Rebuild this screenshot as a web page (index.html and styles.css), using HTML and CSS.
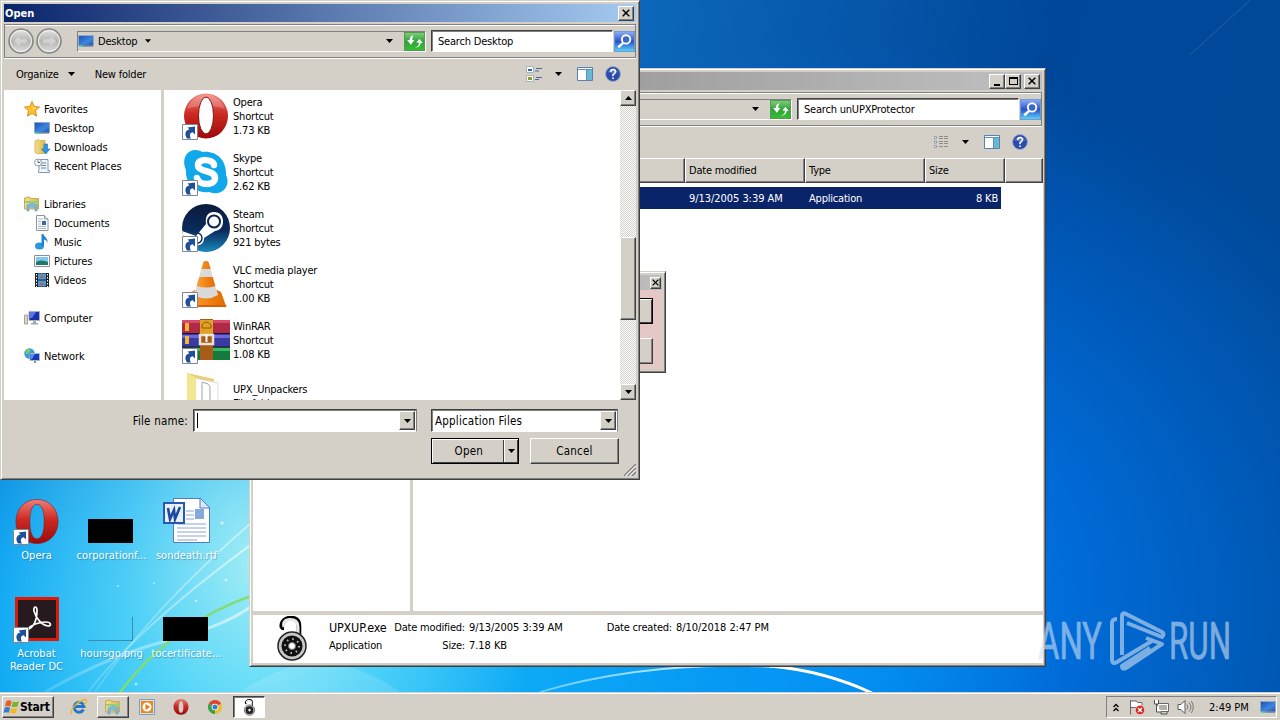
FILE: index.html
```html
<!DOCTYPE html>
<html lang="en">
<head>
    <meta charset="UTF-8">
    <meta name="viewport" content="width=device-width, initial-scale=1.0">
    <title>Desktop</title>
    <link rel="stylesheet" href="styles.css">
</head>
<body>
    <!-- Icon library -->
    <svg class="defs" width="0" height="0">
        <defs>
            <linearGradient id="gRed" x1="0" y1="0" x2="0" y2="1"><stop offset="0" stop-color="#f08078"/><stop offset=".45" stop-color="#cc2a22"/><stop offset="1" stop-color="#9c0a0a"/></linearGradient>
            <linearGradient id="gSteam" x1="0" y1="0" x2="0" y2="1"><stop offset="0" stop-color="#0b1a3c"/><stop offset=".55" stop-color="#0a2a5c"/><stop offset="1" stop-color="#1a88bc"/></linearGradient>
            <linearGradient id="gScreen" x1="0" y1="0" x2="1" y2="1"><stop offset="0" stop-color="#1c4fb0"/><stop offset=".6" stop-color="#3f86e0"/><stop offset="1" stop-color="#1e50a8"/></linearGradient>
            <linearGradient id="gGreen" x1="0" y1="0" x2="0" y2="1"><stop offset="0" stop-color="#7fcf7a"/><stop offset=".5" stop-color="#2fa23a"/><stop offset="1" stop-color="#35c030"/></linearGradient>
            <linearGradient id="gSearch" x1="0" y1="0" x2="0" y2="1"><stop offset="0" stop-color="#8fb0f4"/><stop offset=".5" stop-color="#2a50d0"/><stop offset="1" stop-color="#5cd8f8"/></linearGradient>
            <linearGradient id="gFolder" x1="0" y1="0" x2="1" y2="0"><stop offset="0" stop-color="#f4e08a"/><stop offset="1" stop-color="#dcb850"/></linearGradient>
            <linearGradient id="gNav" x1="0" y1="0" x2="0" y2="1"><stop offset="0" stop-color="#e4e4e2"/><stop offset=".5" stop-color="#b4b4b2"/><stop offset="1" stop-color="#dededc"/></linearGradient>
            <linearGradient id="gCone" x1="0" y1="0" x2="1" y2="0"><stop offset="0" stop-color="#ffa030"/><stop offset="1" stop-color="#e06a00"/></linearGradient>
        </defs>
        <symbol id="shortcut" viewBox="0 0 16 16"><path d="M.5.5h15v15H.5z" fill="#fff" stroke="#7d8794"/><path d="M5 14.500C2 10 3.500 6 7.500 5.500L5.500 3.500 13 2.500v8L10.700 8.300C8 9 7 11 9 14.500z" fill="#1f4f96"/></symbol>
        <symbol id="opera" viewBox="0 0 48 48"><ellipse cx="24" cy="24" rx="22" ry="22.500" fill="url(#gRed)"/><path d="M5 17C9 6 18 2 24 2s15 4 19 15c-8-4-29-4-38 0z" fill="#fff" opacity=".22"/><ellipse cx="24" cy="23.500" rx="7.500" ry="18.500" fill="#fff" stroke="#8c1010" stroke-width="1"/></symbol>
        <symbol id="operaHollow" viewBox="0 0 48 48"><path fill-rule="evenodd" d="M24 1C11 1 2 11 2 24s9 23 22 23 22-10 22-23S37 1 24 1zm0 5c5 0 7.500 7 7.500 18S29 42 24 42s-7.500-7-7.500-18S19 6 24 6z" fill="url(#gRed)" stroke="#8c1818" stroke-width=".6"/></symbol>
        <symbol id="skype" viewBox="0 0 48 48"><path d="M13 2c4 0 6 1 7 2C34 2 45 12 44 27c5 10-3 20-13 18-2 0-3-1-4-1C13 46 3 35 4 22-1 11 5 2 13 2z" fill="#10a8ea"/><path d="M32 17c-1-6-16-7-16 0 0 8 17 4 17 13 0 8-16 8-18 0" fill="none" stroke="#fff" stroke-width="6.500" stroke-linecap="round"/></symbol>
        <symbol id="steam" viewBox="0 0 48 48"><circle cx="24" cy="24" r="24" fill="url(#gSteam)"/><path d="M0 27l14 5 10-12c-1-8 2-12 8-12 6 0 9 4 9 9.500 0 6-4 9.500-8 9.500L22 34c0 6-4 8-9 7L3 37z" fill="#fff"/><circle cx="32" cy="17.500" r="6" fill="none" stroke="#0b2350" stroke-width="2"/><path d="M12 39c5 1 8-1 8-5s-4-6-7-5" fill="none" stroke="#0f2f60" stroke-width="1.500"/></symbol>
        <symbol id="vlc" viewBox="0 0 48 48"><path d="M13 30l-4 2-4 14h39l-5-14-4-2z" fill="url(#gCone)"/><path d="M5 45h39l.5 2H5z" fill="#d86000"/><path d="M21.500 2q2.500-2 5 0L36 35q-12 7-24 0z" fill="#dadada"/><path d="M21.500 2q2.500-2 5 0l2.200 7h-9.400zM17.300 17h13.400l2.600 9q-9 3-18.600 0z" fill="url(#gCone)"/></symbol>
        <symbol id="winrar" viewBox="0 0 48 48"><path d="M0 4h48v14H0z" fill="#b02a48"/><path d="M0 4h48v3H0z" fill="#d84868"/><path d="M0 18h48v13H0z" fill="#3a3aa0"/><path d="M0 19h48v3H0z" fill="#6a6ad8"/><path d="M0 31h48v13H0z" fill="#157a3c"/><path d="M0 32h48v3H0z" fill="#38b860"/><path d="M0 17.500h48M0 31h48" stroke="#1c1430"/><path d="M3 7h4v8H3zM3 20h4v8H3z" fill="#f0b830"/><path d="M18 3h13v41H18z" fill="#a85c18"/><path d="M18 4h13v14H18z" fill="#e0a020"/><path d="M20 9q4-6 9 0v3h-9z" fill="none" stroke="#8c5808"/><path d="M18 19h13v9H18z" fill="none" stroke="#e8e0d0" stroke-width="2.500"/><path d="M24.500 18v8" stroke="#fff" stroke-width="2"/></symbol>
        <symbol id="bigFolder" viewBox="0 0 48 48"><path d="M5 1l27 6v40H5z" fill="#e8d070"/><path d="M12 6l24 5v36H12z" fill="#fff" stroke="#ddd"/><path d="M20 10l6 2q2 1 2 4v28h-8z" fill="#fff" stroke="#a8a4b0"/><path d="M5 1l9 5v42l-9-4z" fill="#f4e690"/></symbol>
        <symbol id="acrobat" viewBox="0 0 44 44"><path d="M0 0h44v44H0z" fill="#e01808"/><path d="M3 3h38v38H3z" fill="#261a1e"/><path d="M12 33c8-3 10-13 10-20 0-4-4-4-3 1 2 8 8 14 14 15 4 0 3-4-2-4-7 0-15 3-18 7-1 2-3 2-2-1" fill="none" stroke="#fff" stroke-width="1.700"/></symbol>
        <symbol id="word" viewBox="0 0 48 48"><path d="M10.500 1.500h27l9 9v35h-36z" fill="#fff" stroke="#4f7dc4"/><path d="M37 1v10h10z" fill="#dbe8fa" stroke="#4f7dc4"/><path d="M23 14h8m-8 4h8m-8 4h8M14 27h29M14 31h29m-29 4h29m-29 4h29m-29 4h20" stroke="#8ba4d8"/><path d="M32 12h9v10h-9z" fill="#86a9dc"/><path d="M1 6h20v20H1z" fill="#e8f0fc" stroke="#2858b0" stroke-width="2"/><path d="M5 11l2 11 4-9 1 9 5-12" fill="none" stroke="#1c4aa0" stroke-width="2.600"/></symbol>
        <symbol id="screen" viewBox="0 0 16 16"><path d="M.5 2.500h15v10H.5z" fill="url(#gScreen)" stroke="#8fa9c8"/><path d="M1 12.500h14v1H1z" fill="#405880"/><path d="M1 12.500h4v1.500H1z" fill="#50d8a0"/></symbol>
        <symbol id="star" viewBox="0 0 16 16"><path d="M8 .5l2.200 5 5.300.5-4 3.700 1.200 5.500L8 12.500l-4.700 2.700 1.200-5.500L.5 6l5.300-.5z" fill="#fbc02c" stroke="#d8902c"/><path d="M8 3l1.200 3.500 3 .3-3 2z" fill="#ffe68a"/></symbol>
        <symbol id="downloads" viewBox="0 0 16 16"><path d="M1 2l4-1.500 1 1h5v13H3l-2-1z" fill="url(#gFolder)" stroke="#cfa848" stroke-width=".7"/><path d="M10 5h3.500v5H16l-4.200 5L7.500 10H10z" fill="#2f96e4" stroke="#1c6cb4" stroke-width=".6"/></symbol>
        <symbol id="recent" viewBox="0 0 16 16"><path d="M5 1.500h9v11h1.500v2h-11v-2H5z" fill="#eef4f8" stroke="#8298ac"/><path d="M7 5h5M7 7.500h5M7 10h5" stroke="#6a8cae"/><circle cx="4" cy="4.500" r="3.500" fill="#f4f8fa" stroke="#8c9caa"/><path d="M4 2.500v2h2" fill="none" stroke="#506478"/></symbol>
        <symbol id="libraries" viewBox="0 0 16 16"><path d="M.5 2l5-1 1 1.500h8V13H.5z" fill="url(#gFolder)" stroke="#c8aa50"/><path d="M1 5h14v2H1z" fill="#8ecf80"/><path d="M3 15V9q5-3 10 0v6h-2v-4H5v4z" fill="#7fc0ea" stroke="#5294c4" stroke-width=".6"/></symbol>
        <symbol id="document" viewBox="0 0 16 16"><path d="M2.500.5h8l3.500 3.500v11.500H2.500z" fill="#fff" stroke="#8a96a4"/><path d="M10.500.5V4H14" fill="#e0e8f0" stroke="#8a96a4"/><path d="M4 4h5M4 6.500h3M4 9h3M4 11.500h8M4 13.500h8" stroke="#a8b8cc"/><path d="M8 6h4v4H8z" fill="#3068a8"/></symbol>
        <symbol id="music" viewBox="0 0 16 16"><ellipse cx="5.500" cy="12" rx="4.500" ry="3.500" fill="#2b96dc"/><path d="M7.500 12V0h2c0 3 4.500 3 4 9-1-3-3-3.500-3.500-3.500V12z" fill="#2582cc"/></symbol>
        <symbol id="picture" viewBox="0 0 16 16"><path d="M.5 2.500h15v11H.5z" fill="#fff" stroke="#8a9098"/><path d="M2 4h12v8H2z" fill="#7cc8ee"/><path d="M2 9q5-3 12 0v3H2z" fill="#207868"/></symbol>
        <symbol id="video" viewBox="0 0 16 16"><path d="M1 1h14v14H1z" fill="#1c242c"/><path d="M4 1.500h8v6H4zM4 8.500h8v6H4z" fill="#4a9cd4"/><path d="M5 6l3-3 3 3zM5 13l3-3 3 3z" fill="#c05868"/><path d="M2.500 2v13M13.500 2v13" stroke="#fff" stroke-dasharray="1.500 1.500"/></symbol>
        <symbol id="computer" viewBox="0 0 16 16"><path d="M.5 5h3v9h-3z" fill="#d8d8c0" stroke="#88887c" stroke-width=".7"/><path d="M5 1.500h10.500v9H5z" fill="#1830b0" stroke="#a8b0c0"/><path d="M6 2h6L8 8H6z" fill="#5878e0"/><path d="M9 11h3v2h2v1.500H7V13h2z" fill="#a0a8b4"/></symbol>
        <symbol id="network" viewBox="0 0 16 16"><circle cx="5.500" cy="5.500" r="5.200" fill="#3898d8"/><path d="M2 2q3-2 5 0L5 5 2 7zM6 7l3 2-3 2z" fill="#6cd070"/><path d="M6 5.500h9.500v7H6z" fill="#1838b8" stroke="#a8b8d0"/><path d="M7 6h4l-3 5H7z" fill="#5c88e8"/><path d="M10 13h2v2h-2z" fill="#8890a0"/></symbol>
        <symbol id="refresh" viewBox="0 0 20 18"><path d="M.5.500h19v17H.5z" fill="url(#gGreen)" stroke="#589858"/><path d="M9 3Q5.500 3.500 5.500 7.500H3l3.500 4.500L10 7.500H7.800Q7.600 5 9 3z" fill="#fff"/><path d="M10.500 15q4-1.500 3.700-5h-2.600L14.700 6.500 18 10.500h-2Q15.500 14.500 10.500 15z" fill="#fff"/></symbol>
        <symbol id="searchBtn" viewBox="0 0 20 20"><path d="M.5.500h19v19H.5z" fill="url(#gSearch)" stroke="#6c9cd0"/><circle cx="11.500" cy="8" r="4" fill="#3c68c8" stroke="#fff" stroke-width="1.800"/><path d="M8.500 11.500l-4.500 4" stroke="#fff" stroke-width="2.400"/></symbol>
        <symbol id="back" viewBox="0 0 26 26"><circle cx="13" cy="13" r="12" fill="url(#gNav)" stroke="#858585" stroke-width="1.500"/><circle cx="13" cy="13" r="10.500" fill="none" stroke="#f2f2f0"/><path d="M12 7l-6 6 6 6v-4h7v-4h-7z" fill="#d2d2d0" stroke="#c4c4c2" stroke-width=".6"/></symbol>
        <symbol id="tiles" viewBox="0 0 16 16"><path d="M.5.500h7v6h-7zM.5 9.500h7v6h-7z" fill="#fff" stroke="#a8b4bc"/><path d="M2 3h4v2H2z" fill="#2868c8"/><path d="M2 11h4v3H2z" fill="#88a030"/><path d="M10 2.500h6M9 5h4M10 11.500h6M9 13.500h4" stroke="#50688c"/></symbol>
        <symbol id="details" viewBox="0 0 16 14"><path d="M1.500 1.500h2v2h-2zM1.500 6h2v2h-2zM1.500 10.500h2v2h-2z" fill="#fff" stroke="#8c98a8"/><path d="M6 1.500h9M6 3.500h9M6 6.500h9M6 8.500h9M6 11.500h9" stroke="#7c7c7c" stroke-dasharray="4 1" stroke-width=".8"/></symbol>
        <symbol id="preview" viewBox="0 0 16 14"><path d="M.5.500h15v13H.5z" fill="#fff" stroke="#5880b0"/><path d="M10 3h5v10h-5z" fill="#68b8d8"/><path d="M1 2.500h14M9.500 3v10" stroke="#5c90b8"/></symbol>
        <symbol id="help" viewBox="0 0 16 16"><circle cx="8" cy="8" r="7.500" fill="#2c4ca8" stroke="#9cacd0"/><path d="M2.500 6Q8-1 13.500 6 8 8 2.500 6z" fill="#5c7ccc"/><path d="M5.700 6q0-2.500 2.400-2.500T10.500 6Q10.300 7.500 8 8.500v1.700" fill="none" stroke="#fff" stroke-width="1.500"/><path d="M7.200 11.500h1.600v1.600H7.200z" fill="#fff"/></symbol>
        <symbol id="down" viewBox="0 0 7 4"><path d="M0 0h7L3.500 4z"/></symbol>
        <symbol id="up" viewBox="0 0 7 4"><path d="M0 4h7L3.500 0z"/></symbol>
        <symbol id="close" viewBox="0 0 8 8"><path d="M.7.700l6.600 6.600M7.300.700L.7 7.300" stroke="#000" stroke-width="1.500"/></symbol>
        <symbol id="lock" viewBox="0 0 32 46"><path d="M8 12q-3 0-2-4 2-6 9-6 8 0 8 8v9" fill="none" stroke="#000" stroke-width="4.600"/><path d="M8 11q-2-7 6-7.500 8 0 8 7.500v8" fill="none" stroke="#e8e8e8" stroke-width="3"/><circle cx="16" cy="30" r="14" fill="#c8c8c8" stroke="#222" stroke-width="1.500"/><circle cx="16" cy="30" r="10.500" fill="#111"/><circle cx="16" cy="30" r="7" fill="none" stroke="#bbb" stroke-width="2" stroke-dasharray="1.500 4"/><circle cx="16" cy="30" r="3.500" fill="#fff" stroke="#777"/></symbol>
        <symbol id="winflag" viewBox="0 0 16 16"><path d="M3 2q2.500-1.500 5 0L7 7Q4.500 6 2 7z" fill="#e85c28"/><path d="M9 2.500q3 1 6-.5l-1.300 5q-3 1-5.700 0z" fill="#78b828"/><path d="M1.700 8q2.500-1 5 .2L5.500 13Q3 12 .5 13z" fill="#3878d8"/><path d="M7.700 8.500q3 1 5.700 0L12 13.300q-3 1-5.500-.3z" fill="#f4b820"/></symbol>
        <symbol id="ie" viewBox="0 0 18 18"><path d="M13.500 11.500A5 5 0 1 1 14 8.500H5" fill="none" stroke="#2478cc" stroke-width="2.800"/><path d="M2 16C-1 13 7 3 15 1.500c3 0 1 4-1 5.500" fill="none" stroke="#e8b828" stroke-width="1.300"/></symbol>
        <symbol id="wmp" viewBox="0 0 16 16"><path d="M.5.500h15v15H.5z" fill="#cfe4f4" stroke="#70a0cc"/><path d="M2 2h12v12H2z" fill="#f08818"/><circle cx="8" cy="8" r="4.500" fill="#fff"/><path d="M6.500 5v6L11 8z" fill="#e87808"/></symbol>
        <symbol id="chrome" viewBox="0 0 16 16"><circle cx="8" cy="8" r="7" fill="#e8c030"/><path d="M8 8L1.900 4.500A7 7 0 0 1 14.100 4.500z" fill="#dc4434"/><path d="M8 8L8 15A7 7 0 0 1 1.900 4.500z" fill="#38a050"/><circle cx="8" cy="8" r="3.300" fill="#fff"/><circle cx="8" cy="8" r="2.500" fill="#3c78d8"/></symbol>
        <symbol id="flag" viewBox="0 0 16 16"><path d="M1.500 1v14.500M1.500 2h6l1 1.500H13v6H8l-1-1H2" fill="#fff" stroke="#686868"/><circle cx="11" cy="11" r="4.700" fill="#d82820" stroke="#fff" stroke-width=".5"/><path d="M9 9l4 4M13 9l-4 4" stroke="#fff" stroke-width="1.400"/></symbol>
        <symbol id="wired" viewBox="0 0 16 16"><path d="M4.500 4.500h11v8h-11z" fill="#fff" stroke="#686868"/><path d="M6 6h8v5H6z" fill="#b0b0a8"/><path d="M8 13v2h6v-2" fill="none" stroke="#505050"/><path d="M1.500 1v4h4V1M3.500 5v8H8" fill="#fff" stroke="#505050"/></symbol>
        <symbol id="sound" viewBox="0 0 17 16"><path d="M1 5.500h3l4-4v13l-4-4H1z" fill="#fff" stroke="#585858"/><path d="M10 5.500q2 2.500 0 5M12 3.500q4 4.500 0 9M14.300 2q4 6 0 12" fill="none" stroke="#787878"/></symbol>
    </svg>

    <div class="desktop">
        <svg class="wallpaper" viewBox="0 0 1280 720">
            <defs>
                <linearGradient id="ray" x1="0" y1="1" x2="1" y2="0"><stop offset="0" stop-color="#fff" stop-opacity=".15"/><stop offset="1" stop-color="#fff" stop-opacity=".6"/></linearGradient>
                <linearGradient id="arc" x1="0" y1="0" x2="1" y2="0"><stop offset="0" stop-color="#8fdcff" stop-opacity=".7"/><stop offset="1" stop-color="#fff"/></linearGradient>
            </defs>
            <g fill="none">
                <path d="M45 692Q110 655 170 640T260 600" stroke="url(#ray)" stroke-width="3"/>
                <path d="M88 692Q140 625 260 538" stroke="url(#ray)" stroke-width="2"/>
                <path d="M95 692Q150 610 260 515" stroke="url(#ray)" stroke-width="1.500"/>
                <path d="M120 692Q175 620 260 593" stroke="#84dc6c" stroke-width="2.500"/>
                <path d="M540 692Q650 660 775 667" stroke="url(#arc)" stroke-width="1.800"/>
                <path d="M770 666Q825 671 872 693" stroke="#fff" stroke-width="3"/>
                <path d="M1190 55L1250 0" stroke="#5c94cc" stroke-opacity=".35"/>
            </g>
            <path d="M240 692Q320 635 400 692z" fill="#fff" opacity=".13"/>
            <g fill="#fff" opacity=".55"><circle cx="222" cy="523" r="1.800"/><circle cx="226" cy="580" r="1.500"/><circle cx="154" cy="583" r="1"/><circle cx="118" cy="586" r="1"/><circle cx="196" cy="601" r="1.200"/><circle cx="136" cy="684" r="1.500"/></g>
        </svg>

        <div class="shortcuts">
            <div class="shortcut"><div class="pic"><svg width="46" height="47"><use href="#operaHollow"/></svg><svg class="arrow"><use href="#shortcut"/></svg></div>Opera</div>
            <div class="shortcut"><div class="pic"><span class="thumb black"></span></div>corporationf...</div>
            <div class="shortcut"><div class="pic"><svg width="48" height="48"><use href="#word"/></svg></div>sondeath.rtf</div>
            <div class="shortcut"><div class="pic"><svg width="44" height="44"><use href="#acrobat"/></svg><svg class="arrow"><use href="#shortcut"/></svg></div>Acrobat<br>Reader DC</div>
            <div class="shortcut"><div class="pic"><span class="thumb clear"></span></div>hoursgo.png</div>
            <div class="shortcut"><div class="pic"><span class="thumb black"></span></div>tocertificate...</div>
        </div>

        <!-- Explorer -->
        <div class="window explorer">
            <div class="titlebar inactive">
                <div class="caption-btn"><span class="min"></span></div>
                <div class="caption-btn"><span class="max"></span></div>
                <div class="caption-btn last"><svg width="8" height="8"><use href="#close"/></svg></div>
            </div>
            <div class="address-row">
                <div class="address"><svg class="caret push"><use href="#down"/></svg><svg width="21" height="19"><use href="#refresh"/></svg></div>
                <div class="search">Search unUPXProtector</div>
                <svg width="21" height="21"><use href="#searchBtn"/></svg>
            </div>
            <div class="toolbar">
                <svg class="push" width="16" height="14"><use href="#details"/></svg>
                <svg class="caret view-caret"><use href="#down"/></svg>
                <svg class="preview" width="16" height="14"><use href="#preview"/></svg>
                <svg width="16" height="16"><use href="#help"/></svg>
            </div>
            <div class="explorer-body">
                <div class="tree"></div>
                <div class="files">
                    <div class="columns">
                        <div></div><div>Date modified</div><div>Type</div><div>Size</div><div></div>
                    </div>
                    <div class="file-row"><span></span><span class="date">9/13/2005 3:39 AM</span><span>Application</span><span class="size">8 KB</span></div>
                </div>
            </div>
            <div class="info-pane">
                <svg width="32" height="46"><use href="#lock"/></svg>
                <div class="info">
                    <span class="name">UPXUP.exe</span><span class="label">Date modified:</span><span class="date">9/13/2005 3:39 AM</span><span class="label">Date created:</span><span class="date">8/10/2018 2:47 PM</span>
                    <span>Application</span><span class="label">Size:</span><span class="date">7.18 KB</span>
                </div>
            </div>
        </div>

        <!-- Small tool window, mostly covered -->
        <div class="window tool">
            <div class="titlebar inactive"><div class="caption-btn"><svg width="7" height="7"><use href="#close"/></svg></div></div>
            <div class="tool-body"><div class="tool-btn default"></div><div class="tool-btn"></div></div>
        </div>

        <!-- Open dialog -->
        <div class="window dialog">
            <div class="titlebar">Open<div class="caption-btn last"><svg width="8" height="8"><use href="#close"/></svg></div></div>
            <div class="address-row">
                <div class="nav-buttons"><svg width="26" height="26"><use href="#back"/></svg><svg class="flip" width="26" height="26"><use href="#back"/></svg></div>
                <div class="address">
                    <svg width="16" height="16"><use href="#screen"/></svg><span class="path">Desktop</span><svg class="caret small"><use href="#down"/></svg>
                    <svg class="caret push"><use href="#down"/></svg><svg width="21" height="19"><use href="#refresh"/></svg>
                </div>
                <div class="search">Search Desktop</div>
                <svg width="21" height="21"><use href="#searchBtn"/></svg>
            </div>
            <div class="toolbar">
                <span>Organize</span><svg class="caret organize"><use href="#down"/></svg><span>New folder</span>
                <svg class="push" width="16" height="16"><use href="#tiles"/></svg>
                <svg class="caret view-caret"><use href="#down"/></svg>
                <svg class="preview" width="16" height="14"><use href="#preview"/></svg>
                <svg width="16" height="16"><use href="#help"/></svg>
            </div>
            <div class="dialog-body">
                <div class="places">
                    <div class="group">
                        <div><svg><use href="#star"/></svg>Favorites</div>
                        <div class="child"><svg><use href="#screen"/></svg>Desktop</div>
                        <div class="child"><svg><use href="#downloads"/></svg>Downloads</div>
                        <div class="child"><svg><use href="#recent"/></svg>Recent Places</div>
                    </div>
                    <div class="group">
                        <div><svg><use href="#libraries"/></svg>Libraries</div>
                        <div class="child"><svg><use href="#document"/></svg>Documents</div>
                        <div class="child"><svg><use href="#music"/></svg>Music</div>
                        <div class="child"><svg><use href="#picture"/></svg>Pictures</div>
                        <div class="child"><svg><use href="#video"/></svg>Videos</div>
                    </div>
                    <div class="group"><div><svg><use href="#computer"/></svg>Computer</div></div>
                    <div class="group"><div><svg><use href="#network"/></svg>Network</div></div>
                </div>
                <div class="items">
                    <div class="item"><div class="pic"><svg width="48" height="48"><use href="#opera"/></svg><svg class="arrow"><use href="#shortcut"/></svg></div><div class="meta">Opera<br>Shortcut<br>1.73 KB</div></div>
                    <div class="item"><div class="pic"><svg width="48" height="48"><use href="#skype"/></svg><svg class="arrow"><use href="#shortcut"/></svg></div><div class="meta">Skype<br>Shortcut<br>2.62 KB</div></div>
                    <div class="item"><div class="pic"><svg width="48" height="48"><use href="#steam"/></svg><svg class="arrow"><use href="#shortcut"/></svg></div><div class="meta">Steam<br>Shortcut<br>921 bytes</div></div>
                    <div class="item"><div class="pic"><svg width="48" height="48"><use href="#vlc"/></svg><svg class="arrow"><use href="#shortcut"/></svg></div><div class="meta">VLC media player<br>Shortcut<br>1.00 KB</div></div>
                    <div class="item"><div class="pic"><svg width="48" height="48"><use href="#winrar"/></svg><svg class="arrow"><use href="#shortcut"/></svg></div><div class="meta">WinRAR<br>Shortcut<br>1.08 KB</div></div>
                    <div class="item"><div class="pic"><svg width="48" height="48"><use href="#bigFolder"/></svg></div><div class="meta">UPX_Unpackers<br>File folder</div></div>
                </div>
                <div class="scrollbar">
                    <div class="scroll-btn"><svg class="caret"><use href="#up"/></svg></div>
                    <div class="scroll-thumb"></div>
                    <div class="scroll-btn"><svg class="caret"><use href="#down"/></svg></div>
                </div>
            </div>
            <div class="dialog-footer">
                <span class="file-label">File name:</span>
                <div class="combo"><span class="cursor"></span><div class="drop"><svg class="caret"><use href="#down"/></svg></div></div>
                <div class="combo filter">Application Files<div class="drop"><svg class="caret"><use href="#down"/></svg></div></div>
                <div class="button open">Open<div class="split"><svg class="caret"><use href="#down"/></svg></div></div>
                <div class="button">Cancel</div>
            </div>
            <svg class="grip" width="12" height="12" viewBox="0 0 12 12"><path d="M0 12L12 0M4 12l8-8M8 12l4-4" stroke="#808080" stroke-width="1.500"/><path d="M1.500 12L12 1.500M5.500 12L12 5.500" stroke="#fff"/></svg>
        </div>

        <svg class="watermark" width="230" height="80" viewBox="0 0 230 80">
            <g fill="#cfe0f2" stroke="#cfe0f2" stroke-width=".7">
                <text x="4" y="54" textLength="64" lengthAdjust="spacingAndGlyphs">ANY</text>
                <text x="135" y="54" textLength="62" lengthAdjust="spacingAndGlyphs">RUN</text>
            </g>
            <g fill="none" stroke="#cfe0f2" stroke-width="4" stroke-linejoin="round">
                <path d="M83 14q-5 0-5 4v36q0 6 5 3l35-21"/>
                <path d="M88 50V11q0-4 4-2l36 18q3 2 0 5l-35-14"/>
                <path d="M112 33l16 6-36 24q-4 2-4-2l28-18"/>
            </g>
        </svg>

        <div class="taskbar">
            <div class="start"><svg width="17" height="17"><use href="#winflag"/></svg>Start</div>
            <div class="task"><svg width="18" height="18"><use href="#ie"/></svg></div>
            <div class="task running"><svg width="18" height="16"><use href="#libraries"/></svg></div>
            <div class="task"><svg width="16" height="16"><use href="#wmp"/></svg></div>
            <div class="task"><svg width="16" height="16"><use href="#operaHollow"/></svg></div>
            <div class="task"><svg width="16" height="16"><use href="#chrome"/></svg></div>
            <div class="task pressed"><svg width="13" height="17"><use href="#lock"/></svg></div>
            <div class="tray">
                <svg class="chevrons" width="6" height="9" viewBox="0 0 6 9"><path d="M.5 4L3 1.500 5.500 4M.5 8L3 5.500 5.500 8" fill="none" stroke="#000" stroke-width="1.300"/></svg>
                <svg width="16" height="16"><use href="#flag"/></svg>
                <svg width="16" height="16"><use href="#wired"/></svg>
                <svg width="17" height="16"><use href="#sound"/></svg>
                <span class="clock">2:49 PM</span>
                <svg width="16" height="16"><use href="#screen"/></svg>
            </div>
        </div>
    </div>
</body>
</html>
```

FILE: styles.css
```css
* {
    box-sizing: border-box;
}
body {
    margin: 0;
    font-family: "DejaVu Sans Condensed", "DejaVu Sans", sans-serif;
    font-size: 11px;
    letter-spacing: -0.2px;
    color: #000;
}
svg {
    display: block;
    flex: none;
}
.defs {
    position: absolute;
}
.desktop {
    position: relative;
    width: 1280px;
    height: 720px;
    overflow: hidden;
    background:
        radial-gradient(ellipse 280px 360px at 260px 560px, rgba(190, 250, 245, 0.85), rgba(130, 235, 250, 0.5) 50%, rgba(60, 200, 250, 0) 100%),
        radial-gradient(ellipse 800px 400px at 260px 680px, #1cc0f8, rgba(10, 170, 250, 0.85) 45%, rgba(10, 150, 245, 0) 100%),
        radial-gradient(ellipse 620px 560px at 820px 600px, #0088f6, rgba(0, 112, 224, 0.9) 40%, rgba(0, 80, 176, 0) 100%),
        linear-gradient(100deg, #0c68bc 45%, #00479a 75%, #004a98);
}
.wallpaper {
    position: absolute;
    left: 0;
    top: 0;
    width: 1280px;
    height: 720px;
}

/* Desktop shortcuts */
.shortcuts {
    position: absolute;
    left: -1px;
    top: 497px;
    display: grid;
    grid-template-columns: repeat(3, 75px);
    grid-auto-rows: 98px;
}
.shortcut {
    color: #fff;
    text-align: center;
    line-height: 13px;
    letter-spacing: 0.05px;
    white-space: nowrap;
    text-shadow: 1px 1px 1px rgba(0, 50, 100, 0.35);
}
.pic {
    position: relative;
    display: flex;
    align-items: center;
    justify-content: center;
    width: 48px;
    height: 48px;
}
.shortcut .pic {
    margin: 0 auto 4px;
}
.arrow {
    position: absolute;
    left: 0;
    bottom: 0;
    width: 16px;
    height: 16px;
}
.thumb {
    width: 45px;
    height: 24px;
    margin: 20px 2px 0 0;
}
.thumb.black {
    background: #000;
}
.thumb.clear {
    border: solid #3a8cb0;
    border-width: 0 1px 1px 0;
}

/* Windows */
.window {
    position: absolute;
    display: flex;
    flex-direction: column;
    background: #d4d0c8;
    border: 1px solid;
    border-color: #d4d0c8 #404040 #404040 #d4d0c8;
    box-shadow: inset 1px 1px #fff, inset -1px -1px #808080;
    padding: 3px;
}
.titlebar {
    display: flex;
    align-items: center;
    height: 18px;
    padding-left: 1px;
    background: linear-gradient(90deg, #0a246a, #a6caf0);
    color: #fff;
    font-weight: bold;
    letter-spacing: 0;
}
.titlebar.inactive {
    background: linear-gradient(90deg, #808080, #c0c0c0);
}
.caption-btn {
    display: flex;
    align-items: center;
    justify-content: center;
    width: 16px;
    height: 15px;
    background: #d4d0c8;
    border: 1px solid;
    border-color: #fff #404040 #404040 #fff;
    box-shadow: inset -1px -1px #808080;
}
.caption-btn:first-child,
.dialog .caption-btn {
    margin-left: auto;
}
.caption-btn.last {
    margin-right: 2px;
}
.min {
    width: 6px;
    height: 2px;
    margin-top: 7px;
    background: #000;
}
.max {
    width: 9px;
    height: 8px;
    border: 1px solid #000;
    border-top-width: 2px;
}
.address-row {
    display: flex;
    align-items: center;
    height: 34px;
    margin-top: 2px;
    border: 1px solid #808080;
    box-shadow: inset 0 1px #fff, 0 1px #fff;
}
.address {
    display: flex;
    align-items: center;
    flex: 1;
    height: 21px;
    border: 1px solid;
    border-color: #808080 #fff #fff #808080;
}
.search {
    height: 22px;
    margin: 0 1px 0 5px;
    padding-left: 6px;
    line-height: 21px;
    background: #fff;
    border: 1px solid;
    border-color: #404040 #fff #fff #404040;
    box-shadow: inset 1px 1px #808080;
}
.caret {
    width: 7px;
    height: 4px;
}
.push {
    margin-left: auto;
}
.address .push {
    margin-right: 11px;
}
.toolbar {
    display: flex;
    align-items: center;
    height: 32px;
    padding-right: 15px;
}
.view-caret {
    margin: 0 15px 0 13px;
}
.preview {
    margin-right: 12px;
}

/* Explorer */
.explorer {
    left: 249px;
    top: 68px;
    width: 797px;
    height: 599px;
}
.explorer .caption-btn:nth-child(2) {
    margin-right: 3px;
}
.explorer .search {
    width: 222px;
}
.explorer .toolbar {
    padding-right: 14px;
}
.explorer-body {
    display: flex;
    flex: 1;
    gap: 3px;
    margin-right: -1px;
}
.tree {
    width: 157px;
    background: #fff;
}
.files {
    flex: 1;
    background: #fff;
}
.columns {
    display: grid;
    grid-template-columns: 272px 120px 120px 80px 1fr;
    height: 23px;
}
.columns div {
    padding-left: 3px;
    line-height: 23px;
    background: #d4d0c8;
    border: 1px solid;
    border-color: #fff #404040 #404040 #fff;
    box-shadow: inset -1px -1px #808080;
}
.file-row {
    display: grid;
    grid-template-columns: 276px 120px 120px 1fr;
    width: 588px;
    height: 22px;
    margin-top: 6px;
    line-height: 23px;
    background: #0a246a;
    color: #fff;
}
.date {
    letter-spacing: -0.05px;
}
.size {
    padding-right: 3px;
    text-align: right;
}
.info-pane {
    display: flex;
    height: 48px;
    margin: 4px -1px 0 0;
    padding: 1px 0 0 23px;
    background: #fff;
}
.info {
    display: grid;
    grid-template-columns: 62px 78px 136px 71px auto;
    grid-auto-rows: 18px;
    margin: 3px 0 0 21px;
    line-height: 18px;
    white-space: nowrap;
}
.info .name {
    font-size: 12.5px;
}
.info .label {
    padding-right: 4px;
    text-align: right;
}

/* Tool window */
.tool {
    left: 440px;
    top: 271px;
    width: 226px;
    height: 102px;
}
.tool .titlebar {
    height: 15px;
}
.tool .caption-btn {
    width: 11px;
    height: 12px;
    margin-right: 1px;
}
.tool-body {
    display: flex;
    flex-direction: column;
    align-items: flex-end;
    gap: 14px;
    flex: 1;
    padding: 8px 9px 0;
    background: #e4c8c6;
}
.tool-btn {
    width: 75px;
    height: 26px;
    background: #d4d0c8;
    border: 1px solid;
    border-color: #fff #404040 #404040 #fff;
    box-shadow: inset -1px -1px #808080;
}
.tool-btn.default {
    border-color: #000;
    box-shadow: inset 1px 1px #fff, inset -1px -1px #404040;
}

/* Open dialog */
.dialog {
    left: 0;
    top: 0;
    width: 640px;
    height: 480px;
}
.dialog .search {
    width: 182px;
}
.nav-buttons {
    display: flex;
    gap: 2px;
    margin: 0 15px 0 3px;
}
.flip {
    transform: scaleX(-1);
}
.path {
    margin: 0 8px 0 4px;
}
.caret.small {
    width: 6px;
}
.dialog .toolbar {
    padding-left: 12px;
}
.organize {
    margin: 0 20px 0 9px;
}
.dialog-body {
    display: flex;
    height: 310px;
}
.places {
    width: 157px;
    padding: 10px 0 0 20px;
    background: #fff;
}
.group {
    margin-bottom: 19px;
}
.group div {
    display: flex;
    align-items: center;
    gap: 4px;
    height: 19px;
    letter-spacing: -0.1px;
}
.group .child {
    padding-left: 10px;
}
.group svg {
    width: 16px;
    height: 16px;
    margin-top: -2px;
}
.items {
    flex: 1;
    margin-left: 3px;
    padding-left: 18px;
    overflow: hidden;
    background: #fff;
}
.item {
    display: flex;
    align-items: center;
    gap: 3px;
    height: 56px;
    line-height: 14px;
}
.item:first-child {
    margin-top: -2px;
}
.meta {
    padding-top: 2px;
}
.scrollbar {
    display: flex;
    flex-direction: column;
    width: 16px;
    background: repeating-conic-gradient(#fff 0 25%, #d4d0c8 0 50%) 0 0 / 2px 2px;
}
.scroll-btn,
.scroll-thumb,
.drop {
    display: flex;
    align-items: center;
    justify-content: center;
    height: 16px;
    background: #d4d0c8;
    border: 1px solid;
    border-color: #fff #404040 #404040 #fff;
    box-shadow: inset -1px -1px #808080;
}
.scroll-thumb {
    height: 83px;
    margin: 131px 0 auto;
}
.dialog-footer {
    display: grid;
    grid-template-columns: 184px 224px 88px 88px;
    grid-template-rows: 24px 26px;
    column-gap: 5px;
    row-gap: 5px;
    padding-top: 9px;
    font-size: 11.5px;
    letter-spacing: 0.2px;
}
.file-label {
    line-height: 24px;
    text-align: right;
}
.combo {
    display: flex;
    align-items: center;
    height: 23px;
    padding: 1px 1px 1px 3px;
    background: #fff;
    border: 1px solid;
    border-color: #404040 #808080 #fff #404040;
    box-shadow: inset 1px 1px #808080;
}
.cursor {
    width: 1px;
    height: 15px;
    background: #000;
}
.drop {
    width: 16px;
    height: 19px;
    margin-left: auto;
}
.filter {
    grid-column: 3 / 5;
    width: 187px;
    margin-left: 9px;
}
.button {
    display: flex;
    align-items: center;
    justify-content: center;
    width: 89px;
    height: 26px;
    border: 1px solid;
    border-color: #fff #404040 #404040 #fff;
    box-shadow: inset -1px -1px #808080;
}
.button.open {
    grid-column: 3;
    justify-content: flex-end;
    width: 88px;
    margin-left: 9px;
    border-color: #000;
    box-shadow: inset 1px 1px #fff, inset -1px -1px #404040;
}
.button:last-child {
    margin-left: 15px;
}
.split {
    display: flex;
    align-items: center;
    justify-content: center;
    width: 15px;
    height: 22px;
    margin-left: 20px;
    border-left: 1px solid #404040;
    box-shadow: inset 1px 0 #fff;
}
.grip {
    position: absolute;
    right: 3px;
    bottom: 3px;
}

.watermark {
    position: absolute;
    left: 1034px;
    top: 605px;
    opacity: 0.6;
    font-family: Roboto, sans-serif;
    font-size: 52px;
    letter-spacing: 0;
}

/* Taskbar */
.taskbar {
    position: absolute;
    left: 0;
    bottom: 0;
    display: flex;
    align-items: center;
    width: 1280px;
    height: 28px;
    padding: 2px 3px 0 2px;
    background: #d4d0c8;
    box-shadow: inset 0 1px #d4d0c8, inset 0 2px #fff;
}
.start {
    display: flex;
    align-items: center;
    width: 52px;
    height: 22px;
    margin-right: 9px;
    font-size: 12px;
    font-weight: bold;
    border: 1px solid;
    border-color: #fff #404040 #404040 #fff;
    box-shadow: inset -1px -1px #808080;
}
.task {
    display: flex;
    align-items: center;
    justify-content: center;
    width: 32px;
    height: 22px;
    margin-right: 2px;
    border: 1px solid transparent;
}
.task.running {
    border-color: #fff #404040 #404040 #fff;
    box-shadow: inset -1px -1px #808080;
}
.task.pressed {
    background: #fff;
    border-color: #404040 #fff #fff #404040;
    box-shadow: inset 1px 1px #808080;
}
.tray {
    display: flex;
    align-items: center;
    gap: 8px;
    width: 171px;
    height: 22px;
    margin-left: auto;
    padding-left: 6px;
    border: 1px solid;
    border-color: #808080 #fff #fff #808080;
}
.chevrons {
    margin-right: 2px;
}
.clock {
    width: 44px;
    margin-left: 7px;
    letter-spacing: 0;
    white-space: nowrap;
}
```
